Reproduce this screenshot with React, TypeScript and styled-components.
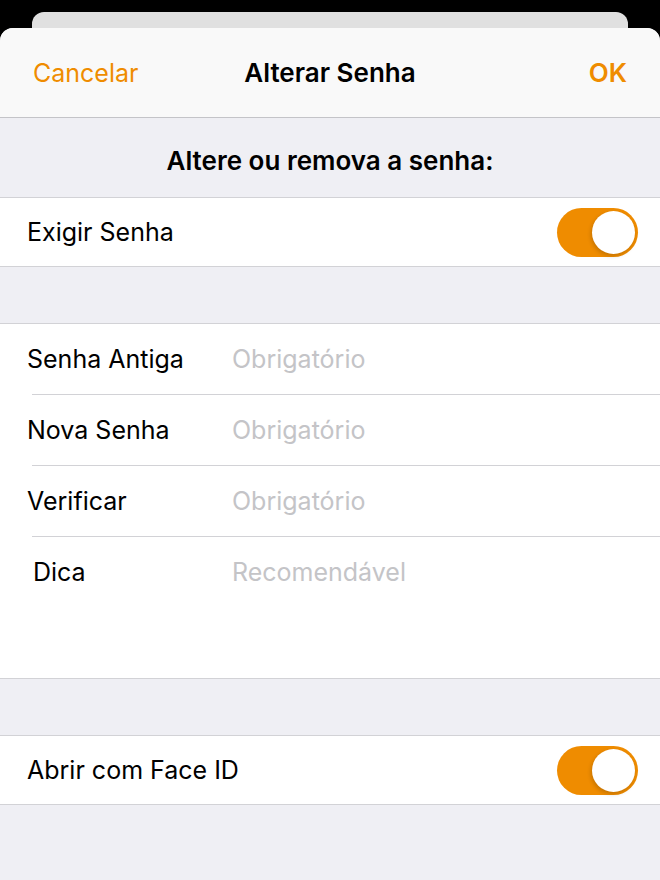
import styled, {createGlobalStyle} from "styled-components";
import {useState} from "react";

const ORANGE = "#ef8c00";

const GlobalStyle = createGlobalStyle`
    html, body {
        margin: 0;
        padding: 0;
        background: #000;
    }

    * {
        box-sizing: border-box;
    }
`;

type Field = {
    label: string;
    placeholder: string;
    indent?: boolean;
};

const fields: Field[] = [
    {label: "Senha Antiga", placeholder: "Obrigatório"},
    {label: "Nova Senha", placeholder: "Obrigatório"},
    {label: "Verificar", placeholder: "Obrigatório"},
    {label: "Dica", placeholder: "Recomendável", indent: true},
];

export default function App() {
    const [requirePassword, setRequirePassword] = useState(true);
    const [faceId, setFaceId] = useState(true);

    return <Screen>
        <GlobalStyle/>
        <BackCard/>
        <Sheet>
            <NavBar>
                <NavButton>Cancelar</NavButton>
                <NavTitle>Alterar Senha</NavTitle>
                <NavButton $bold $right>OK</NavButton>
            </NavBar>

            <SectionHeader>Altere ou remova a senha:</SectionHeader>

            <Group>
                <Row>
                    <Label>Exigir Senha</Label>
                    <Toggle $on={requirePassword} onClick={() => setRequirePassword(!requirePassword)}>
                        <Knob $on={requirePassword}/>
                    </Toggle>
                </Row>
            </Group>

            <Spacer/>

            <Group>
                {fields.map((field, i) => (
                    <FieldRow key={field.label} $last={i === fields.length - 1}>
                        <FieldLabel $indent={field.indent}>{field.label}</FieldLabel>
                        <FieldInput type="password" placeholder={field.placeholder}/>
                    </FieldRow>
                ))}
                <GroupFooter/>
            </Group>

            <Spacer/>

            <Group>
                <Row>
                    <Label>Abrir com Face ID</Label>
                    <Toggle $on={faceId} onClick={() => setFaceId(!faceId)}>
                        <Knob $on={faceId}/>
                    </Toggle>
                </Row>
            </Group>
        </Sheet>
    </Screen>
}

const Screen = styled.div`
    width: 660px;
    height: 880px;
    background: #000;
    display: flex;
    flex-direction: column;
    overflow: hidden;
    font-family: Inter, "Liberation Sans", sans-serif;
    -webkit-font-smoothing: antialiased;
`;

const BackCard = styled.div`
    margin: 12px 32px 0;
    height: 16px;
    flex-shrink: 0;
    background: #e0e0e0;
    border-radius: 12px 12px 0 0;
`;

const Sheet = styled.div`
    flex: 1;
    display: flex;
    flex-direction: column;
    background: #efeff4;
    border-radius: 13px 13px 0 0;
    overflow: hidden;
`;

const NavBar = styled.div`
    height: 90px;
    flex-shrink: 0;
    display: grid;
    grid-template-columns: 1fr auto 1fr;
    align-items: center;
    padding: 0 33px 0;
    background: #f9f9f9;
    border-bottom: 1px solid #c4c4c8;
`;

const NavButton = styled.span<{ $bold?: boolean; $right?: boolean }>`
    color: ${ORANGE};
    font-size: ${({$bold}) => $bold ? "26px" : "25px"};
    font-weight: ${({$bold}) => $bold ? 600 : 400};
    text-align: ${({$right}) => $right ? "right" : "left"};
`;

const NavTitle = styled.span`
    color: #000;
    font-size: 26px;
    font-weight: 600;
`;

const SectionHeader = styled.div`
    height: 79px;
    flex-shrink: 0;
    display: flex;
    align-items: center;
    justify-content: center;
    padding-top: 5px;
    font-size: 26px;
    font-weight: 600;
    color: #000;
`;

const Group = styled.div`
    flex-shrink: 0;
    background: #fff;
    border-top: 1px solid #d2d2d6;
    border-bottom: 1px solid #d2d2d6;
`;

const Row = styled.div`
    height: 68px;
    display: flex;
    align-items: center;
    justify-content: space-between;
    padding: 0 22px 0 27px;
`;

const Label = styled.span`
    font-size: 25px;
    color: #000;
`;

const Toggle = styled.div<{ $on: boolean }>`
    position: relative;
    width: 81px;
    height: 49px;
    border-radius: 25px;
    background: ${({$on}) => $on ? ORANGE : "#e5e5ea"};
    cursor: pointer;
`;

const Knob = styled.div<{ $on: boolean }>`
    position: absolute;
    top: 3px;
    left: ${({$on}) => $on ? "35px" : "3px"};
    width: 43px;
    height: 43px;
    border-radius: 50%;
    background: #fff;
    box-shadow: -1px 2px 4px rgba(0, 0, 0, 0.18);
`;

const Spacer = styled.div`
    height: 56px;
    flex-shrink: 0;
`;

const FieldRow = styled.div<{ $last?: boolean }>`
    height: 71px;
    display: grid;
    grid-template-columns: 205px 1fr;
    align-items: center;
    padding-left: 27px;
    padding-bottom: 1px;
    background-image: ${({$last}) => $last ? "none" : "linear-gradient(#d2d2d6, #d2d2d6)"};
    background-size: calc(100% - 32px) 1px;
    background-position: 32px 100%;
    background-repeat: no-repeat;
`;

const FieldLabel = styled.span<{ $indent?: boolean }>`
    font-size: 25px;
    color: #000;
    padding-left: ${({$indent}) => $indent ? "6px" : "0"};
`;

const FieldInput = styled.input`
    border: none;
    outline: none;
    background: transparent;
    padding: 0;
    width: 100%;
    font-family: inherit;
    font-size: 25px;
    color: #000;

    &::placeholder {
        color: #c4c4c7;
    }
`;

const GroupFooter = styled.div`
    height: 70px;
`;
